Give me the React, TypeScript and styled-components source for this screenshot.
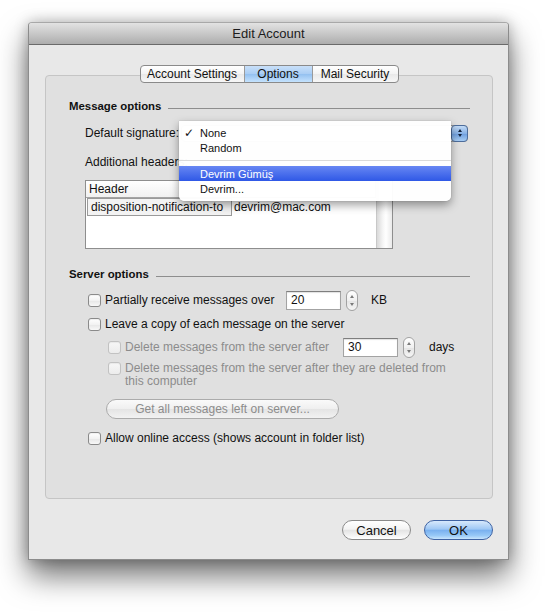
import styled, { createGlobalStyle } from 'styled-components';

const GlobalStyle = createGlobalStyle`
  html, body {
    margin: 0;
    padding: 0;
    background: #ffffff;
  }
  body {
    font-family: "Liberation Sans", Arial, sans-serif;
    font-size: 12px;
    color: #111;
  }
`;

const App = () => {
  return (
    <Page>
      <GlobalStyle />
      <Window>
        <TitleBar>Edit Account</TitleBar>
        <Content>
          <Tabs>
            <Tab $w={103}>Account Settings</Tab>
            <Tab $w={68} $active>Options</Tab>
            <Tab $w={86}>Mail Security</Tab>
          </Tabs>
          <TabBox>
            <SectionHead>
              <span>Message options</span>
              <Rule />
            </SectionHead>

            <SigRow>
              <Label>Default signature:</Label>
              <PopupButton>
                <PopupArrows>
                  <TriUp $dark />
                  <TriDown $dark />
                </PopupArrows>
              </PopupButton>
            </SigRow>

            <PlainRow>
              <Label>Additional headers:</Label>
            </PlainRow>

            <Table>
              <TableMain>
                <HeaderRow>
                  <HeadCell $w={146}>Header</HeadCell>
                  <HeadCell />
                </HeaderRow>
                <DataRow>
                  <EditCell>disposition-notification-to</EditCell>
                  <Cell>devrim@mac.com</Cell>
                </DataRow>
              </TableMain>
              <ScrollTrack />
            </Table>

            <SectionHead $gap={17}>
              <span>Server options</span>
              <Rule />
            </SectionHead>

            <OptionRow $top={8}>
              <Check />
              <Label $w={177}>Partially receive messages over</Label>
              <Field>20</Field>
              <Stepper>
                <TriUp />
                <TriDown />
              </Stepper>
              <Unit $gap={13}>KB</Unit>
            </OptionRow>

            <OptionRow $top={4}>
              <Check />
              <Label>Leave a copy of each message on the server</Label>
            </OptionRow>

            <OptionRow $top={3} $indent>
              <Check $disabled />
              <Label $w={214} $disabled>
                Delete messages from the server after
              </Label>
              <Field>30</Field>
              <Stepper>
                <TriUp />
                <TriDown />
              </Stepper>
              <Unit $gap={14}>days</Unit>
            </OptionRow>

            <WrapRow>
              <Check $disabled />
              <Label $disabled>
                Delete messages from the server after they are deleted from
                <br />
                this computer
              </Label>
            </WrapRow>

            <PillButton disabled>Get all messages left on server...</PillButton>

            <OptionRow $top={9}>
              <Check />
              <Label>Allow online access (shows account in folder list)</Label>
            </OptionRow>

            <Menu>
              <MenuItem>
                <Tick>✓</Tick>None
              </MenuItem>
              <MenuItem>
                <Tick />
                Random
              </MenuItem>
              <MenuSeparator />
              <MenuItem $selected>
                <Tick />
                Devrim Gümüş
              </MenuItem>
              <MenuItem>
                <Tick />
                Devrim...
              </MenuItem>
            </Menu>
          </TabBox>

          <Footer>
            <DialogButton>Cancel</DialogButton>
            <DialogButton $primary>OK</DialogButton>
          </Footer>
        </Content>
      </Window>
    </Page>
  );
};

export default App;

const Page = styled.div`
  padding: 22px 0 60px 28px;
`;

const Window = styled.div`
  width: 481px;
  box-sizing: border-box;
  background: #e8e8e8;
  border: 1px solid #8c8c8c;
  border-top-color: #a8a8a8;
  border-radius: 4px 4px 0 0;
  box-shadow: 0 16px 30px rgba(0, 0, 0, 0.55), 0 0 14px rgba(0, 0, 0, 0.25);
`;

const TitleBar = styled.div`
  height: 21px;
  line-height: 21px;
  text-align: center;
  font-size: 13px;
  color: #1c1c1c;
  background: linear-gradient(#e2e2e2, #c8c8c8 50%, #adadad);
  border-bottom: 1px solid #6a6a6a;
  border-radius: 3px 3px 0 0;
`;

const Content = styled.div`
  padding: 20px 15px 19px 16px;
  display: flex;
  flex-direction: column;
`;

const Tabs = styled.div`
  display: flex;
  align-self: center;
  height: 18px;
  margin-bottom: -8px;
  position: relative;
  z-index: 1;
  border: 1px solid #8a8a8a;
  border-radius: 4px;
  box-sizing: border-box;
  overflow: hidden;
  background: linear-gradient(#ffffff, #f3f3f3 50%, #e9e9e9 51%, #f7f7f7);
`;

const Tab = styled.div<{ $w: number; $active?: boolean }>`
  width: ${(p) => p.$w}px;
  box-sizing: border-box;
  text-align: center;
  line-height: 16px;
  font-size: 12px;
  color: #111;
  border-left: 1px solid #9a9a9a;
  &:first-child {
    border-left: none;
  }
  background: ${(p) =>
    p.$active
      ? 'linear-gradient(#c9e0f9, #a9cdf4 50%, #93c0f0 51%, #c4e2fd)'
      : 'transparent'};
`;

const TabBox = styled.div`
  position: relative;
  height: 424px;
  box-sizing: border-box;
  background: #e0e0e0;
  border: 1px solid #c5c5c5;
  border-radius: 4px;
  padding: 22px 22px 0 23px;
`;

const SectionHead = styled.div<{ $gap?: number }>`
  display: flex;
  align-items: center;
  height: 16px;
  margin-top: ${(p) => p.$gap ?? 0}px;
  font-weight: bold;
  font-size: 11.4px;
  gap: 7px;
`;

const Rule = styled.div`
  flex: 1;
  height: 1px;
  margin-top: 5px;
  background: #8e8e8e;
`;

const Label = styled.span<{ $w?: number; $disabled?: boolean }>`
  font-size: 12px;
  line-height: 13px;
  color: ${(p) => (p.$disabled ? '#8c8c8c' : '#111')};
  ${(p) => (p.$w ? `width: ${p.$w}px; flex-shrink: 0;` : '')}
`;

const SigRow = styled.div`
  display: flex;
  align-items: center;
  height: 20px;
  margin-top: 9px;
  padding-left: 16px;
  gap: 2px;
`;

const PopupButton = styled.div`
  flex: 1;
  height: 15px;
  margin-right: 2px;
  display: flex;
  justify-content: flex-end;
  border: 1px solid #9a9a9a;
  border-radius: 4px;
  background: linear-gradient(#ffffff, #eeeeee);
`;

const PopupArrows = styled.div`
  width: 15px;
  margin: -1px -1px -1px 0;
  display: flex;
  flex-direction: column;
  align-items: center;
  justify-content: center;
  gap: 2px;
  border: 1px solid #4d6d9c;
  border-radius: 4px;
  background: linear-gradient(#c3dbf6, #86b1e6 50%, #6b9cdd 51%, #a7cdf4);
`;

const TriUp = styled.span<{ $dark?: boolean }>`
  width: 0;
  height: 0;
  border-left: 2.5px solid transparent;
  border-right: 2.5px solid transparent;
  border-bottom: 3px solid ${(p) => (p.$dark ? '#14243d' : '#7a7a7a')};
`;

const TriDown = styled.span<{ $dark?: boolean }>`
  width: 0;
  height: 0;
  border-left: 2.5px solid transparent;
  border-right: 2.5px solid transparent;
  border-top: 3px solid ${(p) => (p.$dark ? '#14243d' : '#7a7a7a')};
`;

const PlainRow = styled.div`
  display: flex;
  align-items: center;
  height: 20px;
  margin-top: 9px;
  padding-left: 16px;
`;

const Table = styled.div`
  display: flex;
  width: 308px;
  height: 69px;
  box-sizing: border-box;
  margin: 8px 0 0 16px;
  border: 1px solid #8e8e8e;
  background: #ffffff;
`;

const TableMain = styled.div`
  flex: 1;
  display: flex;
  flex-direction: column;
`;

const HeaderRow = styled.div`
  display: flex;
  height: 16px;
  border-bottom: 1px solid #a4a4a4;
  background: linear-gradient(#ffffff, #f1f1f1);
`;

const HeadCell = styled.div<{ $w?: number }>`
  ${(p) => (p.$w ? `width: ${p.$w}px;` : 'flex: 1;')}
  box-sizing: border-box;
  padding-left: 3px;
  line-height: 16px;
  font-size: 12px;
  border-right: 1px solid #c4c4c4;
`;

const DataRow = styled.div`
  display: flex;
  height: 18px;
  align-items: stretch;
`;

const EditCell = styled.div`
  width: 145px;
  box-sizing: border-box;
  margin-left: 1px;
  padding-left: 3px;
  line-height: 16px;
  font-size: 12px;
  border: 1px solid #9a9a9a;
  background: #f3f3f3;
`;

const Cell = styled.div`
  flex: 1;
  padding-left: 2px;
  line-height: 18px;
  font-size: 12px;
`;

const ScrollTrack = styled.div`
  width: 15px;
  border-left: 1px solid #c8c8c8;
  background: linear-gradient(90deg, #d9d9d9, #f6f6f6 40%, #ffffff 60%, #eaeaea);
`;

const OptionRow = styled.div<{ $top: number; $indent?: boolean }>`
  display: flex;
  align-items: center;
  height: 20px;
  margin-top: ${(p) => p.$top}px;
  padding-left: ${(p) => (p.$indent ? 39 : 19)}px;
  gap: 4px;
`;

const WrapRow = styled.div`
  display: flex;
  align-items: flex-start;
  margin-top: 4px;
  padding-left: 39px;
  padding-top: 1px;
  gap: 4px;
  height: 25px;
`;

const Check = styled.span<{ $disabled?: boolean }>`
  flex-shrink: 0;
  width: 13px;
  height: 13px;
  box-sizing: border-box;
  border: 1px solid ${(p) => (p.$disabled ? '#c2c2c2' : '#8a8a8a')};
  border-radius: 3px;
  background: ${(p) =>
    p.$disabled
      ? 'linear-gradient(#f7f7f7, #ececec)'
      : 'linear-gradient(#ffffff, #f2f2f2 50%, #e6e6e6 51%, #f8f8f8)'};
  box-shadow: inset 0 1px 1px rgba(0, 0, 0, 0.06);
`;

const Field = styled.div`
  width: 55px;
  height: 19px;
  box-sizing: border-box;
  padding-left: 4px;
  line-height: 17px;
  font-size: 12px;
  background: #ffffff;
  border: 1px solid #a3a3a3;
  border-top-color: #7e7e7e;
  box-shadow: inset 0 1px 1px rgba(0, 0, 0, 0.12);
`;

const Stepper = styled.div`
  width: 12px;
  height: 21px;
  box-sizing: border-box;
  margin-left: 1px;
  display: flex;
  flex-direction: column;
  align-items: center;
  justify-content: space-between;
  padding: 4px 0;
  border: 1px solid #a2a2a2;
  border-radius: 6px;
  background: linear-gradient(#ffffff, #f0f0f0 50%, #e4e4e4 51%, #f5f5f5);
`;

const Unit = styled.span<{ $gap: number }>`
  margin-left: ${(p) => p.$gap - 4}px;
  font-size: 12px;
`;

const PillButton = styled.button`
  display: block;
  width: 233px;
  height: 20px;
  margin: 12px 0 0 37px;
  padding: 0;
  font-family: "Liberation Sans", Arial, sans-serif;
  font-size: 12px;
  color: #8c8c8c;
  border: 1px solid #ababab;
  border-radius: 10px;
  background: linear-gradient(#fafafa, #efefef 50%, #e4e4e4 51%, #f2f2f2);
`;

const Menu = styled.div`
  position: absolute;
  left: 133px;
  top: 45px;
  width: 272px;
  height: 80px;
  box-sizing: border-box;
  padding: 4px 0;
  background: rgba(255, 255, 255, 0.97);
  border-radius: 0 0 5px 5px;
  box-shadow: 0 4px 10px rgba(0, 0, 0, 0.38), 0 0 1px rgba(0, 0, 0, 0.4);
`;

const MenuItem = styled.div<{ $selected?: boolean }>`
  display: flex;
  align-items: center;
  height: 15px;
  padding-left: 5px;
  font-size: 11px;
  color: ${(p) => (p.$selected ? '#ffffff' : '#111')};
  background: ${(p) =>
    p.$selected ? 'linear-gradient(#6787f3, #2f58e6)' : 'transparent'};
`;

const Tick = styled.span`
  width: 16px;
  font-family: "DejaVu Sans", sans-serif;
  font-size: 12px;
  line-height: 12px;
`;

const MenuSeparator = styled.div`
  height: 1px;
  margin: 5px 0 5px;
  background: #dadada;
`;

const Footer = styled.div`
  display: flex;
  justify-content: flex-end;
  gap: 13px;
  margin-top: 21px;
`;

const DialogButton = styled.button<{ $primary?: boolean }>`
  width: 69px;
  height: 20px;
  padding: 0;
  font-family: "Liberation Sans", Arial, sans-serif;
  font-size: 13px;
  color: #111;
  border-radius: 10px;
  border: 1px solid ${(p) => (p.$primary ? '#3f63a3' : '#8a8a8a')};
  background: ${(p) =>
    p.$primary
      ? 'linear-gradient(#d7e9fc, #9fc8f5 45%, #7ab1ef 52%, #97c8f7 80%, #c8e5fd)'
      : 'linear-gradient(#ffffff, #f4f4f4 45%, #e4e4e4 52%, #f3f3f3 80%, #ffffff)'};
`;
